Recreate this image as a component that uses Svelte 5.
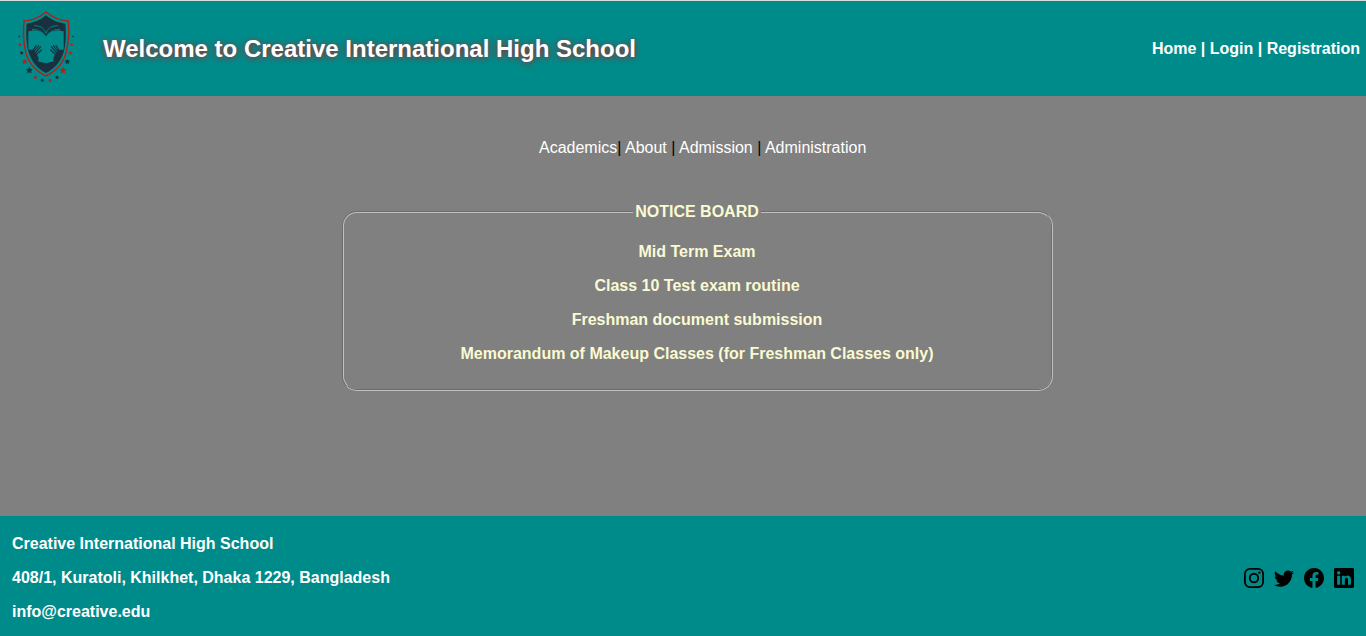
<script>
  const notices = [
    'Mid Term Exam',
    'Class 10 Test exam routine',
    'Freshman document submission',
    'Memorandum of Makeup Classes (for Freshman Classes only)'
  ];
  const stars = [
    [58, 109, 3, 0], [60, 134, 5, 1], [65, 159, 6, 0], [74, 185, 8, 1], [88, 211, 10, 0],
    [106, 232, 6, 1], [127, 241, 6, 0], [150, 241, 6, 1], [171, 232, 6, 0], [189, 211, 10, 1],
    [202, 185, 8, 0], [211, 159, 6, 1], [215, 134, 5, 1], [219, 109, 3, 0]
  ];
  function starPoints([x, y, r]) {
    return Array.from({ length: 10 }, (_, i) => {
      const a = -Math.PI / 2 + (i * Math.PI) / 5;
      const d = i % 2 ? r * 0.55 : r * 1.1;
      return `${(x + d * Math.cos(a)).toFixed(1)},${(y + d * Math.sin(a)).toFixed(1)}`;
    }).join(' ');
  }
</script>

<div class="page">
  <header>
    <svg class="logo" viewBox="54 27 174 225" aria-hidden="true">
      <path d="M138 36C122 50 97 61 72 63C69 91 71 126 76 151C84 190 108 213 138 228C168 213 192 190 200 151C205 126 208 91 205 63C179 61 154 50 138 36Z" fill="none" stroke="#a8241c" stroke-width="4.4" />
      <path d="M138 46C123 59 103 68 80 71C77 107 80 138 86 157C95 187 115 208 138 219C161 208 182 187 191 157C197 138 199 107 196 71C174 68 153 59 138 46Z" fill="#19303f" />
      <path d="M85 94L96 92V86Q125 86 138 107Q151 86 180 86V92L191 94V146L176 164L160 182L163 184L137 190L113 184L116 182L100 164L85 146Z" fill="#008b8b" />
      <path d="M102 77Q130 76 138 100Q146 76 174 77" fill="none" stroke="#008b8b" stroke-width="2.6" />
      <path d="M96 90Q127 88 138 108Q149 88 180 90" fill="none" stroke="#19303f" stroke-width="2" />
      <g fill="none" stroke="#19303f" stroke-linecap="round" stroke-linejoin="round">
        <path d="M97 157L105 167L109 176" stroke-width="14" />
        <path d="M95 157L91 150M97 154L108 137M102 155L116 137M106 159L122 140M109 164L124 150" stroke-width="3.6" />
        <path d="M179 157L171 167L167 176" stroke-width="14" />
        <path d="M181 157L185 150M179 154L168 137M174 155L160 137M170 159L154 140M167 164L152 150" stroke-width="3.6" />
      </g>
      {#each stars as star}
        <polygon points={starPoints(star)} fill={star[3] ? '#b3211b' : '#19303f'} />
      {/each}
    </svg>
    <h1>Welcome to Creative International High School</h1>
    <nav class="account"><a href="#home">Home</a> | <a href="#login">Login</a> | <a href="#registration">Registration</a></nav>
  </header>

  <main>
    <nav class="sections"><a href="#academics">Academics</a>| <a href="#about">About</a> | <a href="#admission">Admission</a> | <a href="#administration">Administration</a></nav>
    <fieldset>
      <legend>NOTICE BOARD</legend>
      {#each notices as notice}
        <p>{notice}</p>
      {/each}
    </fieldset>
  </main>

  <footer>
    <div class="contact">
      <p>Creative International High School</p>
      <p>408/1, Kuratoli, Khilkhet, Dhaka 1229, Bangladesh</p>
      <p>info@creative.edu</p>
    </div>
    <div class="social">
      <svg viewBox="0 0 16 16" fill="none" stroke="#000" stroke-width="1.44">
        <rect x=".72" y=".72" width="14.56" height="14.56" rx="4" />
        <circle cx="8" cy="8" r="3.39" />
        <circle cx="12.27" cy="3.73" r=".96" fill="#000" stroke="none" />
      </svg>
      <svg viewBox="0 0 16 16"><path d="M5.026 15c6.038 0 9.341-5.003 9.341-9.334 0-.14 0-.282-.006-.422A6.685 6.685 0 0 0 16 3.542a6.658 6.658 0 0 1-1.889.518 3.301 3.301 0 0 0 1.447-1.817 6.533 6.533 0 0 1-2.087.793A3.286 3.286 0 0 0 7.875 6.03a9.325 9.325 0 0 1-6.767-3.429 3.289 3.289 0 0 0 1.018 4.382A3.323 3.323 0 0 1 .64 6.575v.045a3.288 3.288 0 0 0 2.632 3.218 3.203 3.203 0 0 1-.865.115 3.23 3.23 0 0 1-.614-.057 3.283 3.283 0 0 0 3.067 2.277A6.588 6.588 0 0 1 .78 13.58a6.32 6.32 0 0 1-.78-.045A9.344 9.344 0 0 0 5.026 15z" /></svg>
      <svg viewBox="0 0 16 16"><path d="M16 8.049c0-4.446-3.582-8.05-8-8.05C3.58 0-.002 3.603-.002 8.05c0 4.017 2.926 7.347 6.75 7.951v-5.625h-2.03V8.05H6.75V6.275c0-2.017 1.195-3.131 3.022-3.131.876 0 1.791.157 1.791.157v1.98h-1.009c-.993 0-1.303.621-1.303 1.258v1.51h2.218l-.354 2.326H9.25V16c3.824-.604 6.75-3.934 6.75-7.951z" /></svg>
      <svg viewBox="0 0 16 16"><path d="M0 1.146C0 .513.526 0 1.175 0h13.65C15.474 0 16 .513 16 1.146v13.708c0 .633-.526 1.146-1.175 1.146H1.175C.526 16 0 15.487 0 14.854V1.146zm4.943 12.248V6.169H2.542v7.225h2.401zm-1.2-8.212c.837 0 1.358-.554 1.358-1.248-.015-.709-.52-1.262-1.342-1.262-.822 0-1.359.553-1.359 1.262 0 .694.521 1.248 1.327 1.248h.016zm4.908 8.212V9.359c0-.216.016-.432.08-.586.173-.431.568-.878 1.232-.878.869 0 1.216.662 1.216 1.634v3.865h2.401V9.25c0-2.22-1.184-3.252-2.764-3.252-1.274 0-1.845.7-2.165 1.193v.025h-.016a5.54 5.54 0 0 1 .016-.025V6.169h-2.4c.03.678 0 7.225 0 7.225h2.4z" /></svg>
    </div>
  </footer>
</div>

<style>
  .page {
    display: flex;
    flex-direction: column;
    box-sizing: border-box;
    width: 100%;
    height: 636px;
    overflow: hidden;
    background: #808080;
    font: 16px/18px "Liberation Sans", Arial, sans-serif;
  }
  a { color: inherit; text-decoration: none; }
  header {
    display: flex;
    align-items: center;
    box-sizing: border-box;
    height: 96px;
    padding: 0 6px 0 18px;
    border-top: 1px solid #d5dada;
    background: #008b8b;
    color: #fff;
  }
  .logo { width: 58px; height: 75px; margin-bottom: 4px; }
  h1 {
    margin: 0 auto 0 27px;
    font-size: 24px;
    line-height: 28px;
    text-shadow: 0 1px 6px #b01c1c;
  }
  .account { font-weight: bold; white-space: nowrap; }
  main { flex: 1; padding-top: 43px; }
  .sections { padding-left: 539px; white-space: nowrap; }
  .sections a { color: #fff; }
  fieldset {
    box-sizing: border-box;
    width: 711px;
    margin: 46px 0 0 342px;
    padding: 5.6px 12.5px 10px 11.5px;
    border: 2px groove #c0c0c0;
    border-radius: 15px;
    color: #fafad2;
    font-weight: bold;
    text-align: center;
  }
  legend { margin: 0 auto; padding: 0 2px; }
  p { margin: 16px 0; }
  footer {
    display: flex;
    align-items: center;
    justify-content: space-between;
    box-sizing: border-box;
    height: 120px;
    padding: 3px 12px 0;
    background: #008b8b;
    color: #fff;
    font-weight: bold;
  }
  .social { display: flex; gap: 10px; }
  .social svg { width: 20px; height: 20px; }
</style>
